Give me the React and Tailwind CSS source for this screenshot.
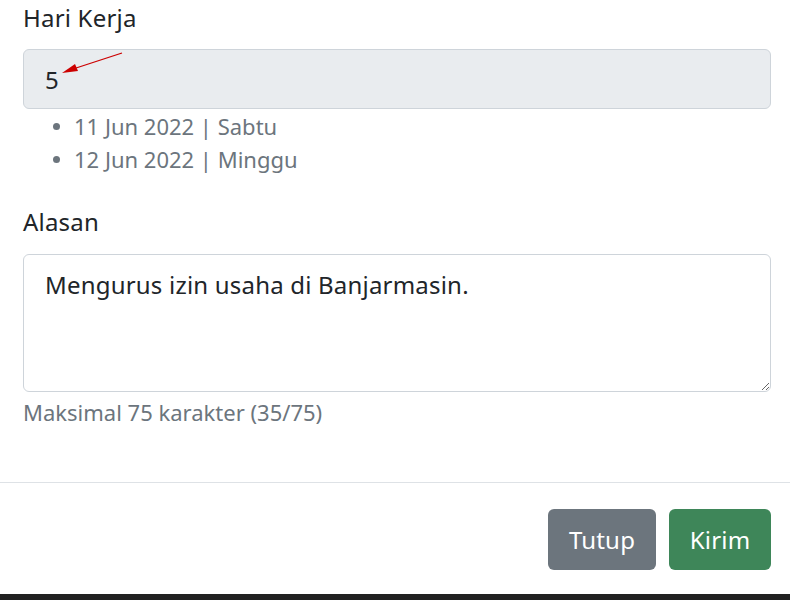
import { useState } from "react";

const tanggal = ["11 Jun 2022 | Sabtu", "12 Jun 2022 | Minggu"];

export default function App() {
  const [alasan, setAlasan] = useState("Mengurus izin usaha di Banjarmasin.");

  return (
    <div
      className="w-[790px] h-[600px] bg-white flex flex-col overflow-hidden text-[#212529] tracking-[0.2px]"
      style={{ fontFamily: '"Noto Sans", "Open Sans", sans-serif' }}
    >
      {/* Isi form */}
      <div className="pl-[23px] pr-[19px]">
        <label className="block text-[24px] leading-[36px]">Hari Kerja</label>
        <div className="relative mt-[13px]">
          <input
            type="text"
            value="5"
            readOnly
            className="block w-full h-[60px] bg-[#e9ecef] border border-[#ced4da] rounded-[6px] px-[21px] text-[24px] text-[#212529] outline-none"
          />
          {/* panah merah */}
          <svg className="absolute left-0 top-0 pointer-events-none" width="140" height="40" viewBox="0 0 140 40">
            <line x1="99" y1="4" x2="50" y2="20" stroke="#cc0000" strokeWidth="1.3" />
            <polygon points="39,24 52,15 55,22" fill="#cc0000" />
          </svg>
        </div>
        <ul className="mt-[1px]">
          {tanggal.map((t) => (
            <li key={t} className="flex items-center h-[33px] text-[22px] tracking-normal text-[#6c757d]">
              <span className="ml-[30px] mr-[14px] w-[7px] h-[7px] rounded-full bg-[#6c757d]" />
              {t}
            </li>
          ))}
        </ul>

        <label className="block mt-[28px] text-[24px] leading-[36px]">Alasan</label>
        <textarea
          value={alasan}
          onChange={(e) => setAlasan(e.target.value)}
          maxLength={75}
          className="block mt-[14px] w-full h-[138px] border border-[#ced4da] rounded-[6px] px-[21px] py-[12px] text-[24px] leading-[36px] text-[#212529] outline-none"
        />
        <p className="mt-[5px] text-[22px] leading-[31px] tracking-normal text-[#6c757d]">
          Maksimal 75 karakter ({alasan.length}/75)
        </p>
      </div>

      {/* Footer */}
      <div className="mt-[54px] border-t border-[#dee2e6] flex justify-end gap-[13px] pr-[19px] pt-[26px]">
        <button className="w-[108px] h-[61px] rounded-[6px] bg-[#6c757d] text-white text-[24px]">Tutup</button>
        <button className="w-[102px] h-[61px] rounded-[6px] bg-[#3e8659] text-white text-[24px]">Kirim</button>
      </div>

      <div className="mt-auto h-[6px] bg-[#212121]" />
    </div>
  );
}
